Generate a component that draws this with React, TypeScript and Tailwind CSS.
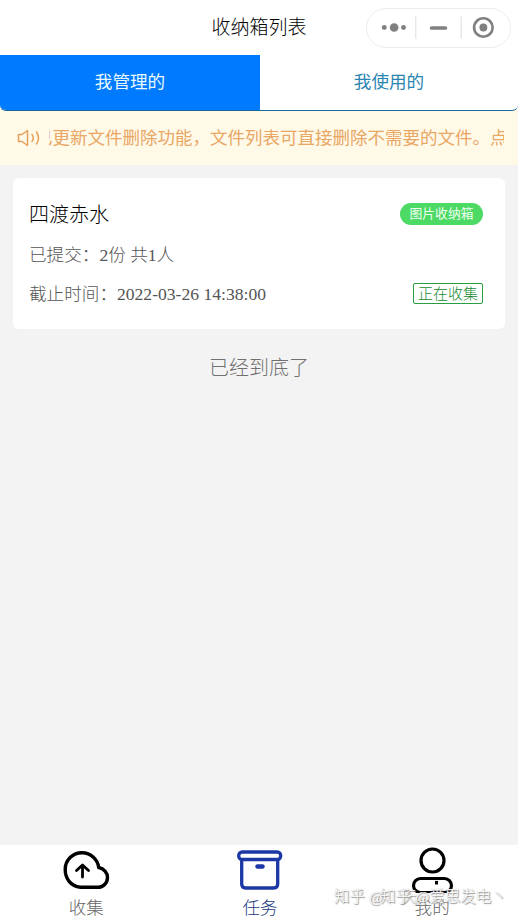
function Capsule() {
  return (
    <div className="flex h-10 w-[145px] items-center rounded-full border border-[#ededed] bg-white">
      <svg viewBox="0 0 145 40" className="h-10 w-full" fill="#808080">
        <circle cx="17.5" cy="19.5" r="2.5" />
        <circle cx="27.5" cy="19.5" r="4.4" />
        <circle cx="37" cy="19.5" r="2.5" />
        <path d="M49.5 8v23M95.5 8v23" stroke="#dcdcdc" />
        <path d="M65.500 20h14" stroke="#808080" strokeWidth="3.8" strokeLinecap="round" />
        <circle cx="118" cy="19.5" r="9.4" fill="none" stroke="#808080" strokeWidth="2.7" />
        <circle cx="118" cy="19.5" r="4" />
      </svg>
    </div>
  );
}

function SpeakerIcon() {
  return (
    <svg viewBox="0 0 24 20" className="h-5 w-6 shrink-0" fill="none" stroke="#e5a15b" strokeWidth="1.5" strokeLinejoin="round" strokeLinecap="round">
      <path d="M1.5 6.5H5L10.500 2.500v15L5 13.5H1.5z" />
      <path d="M15 6.5q2.6 3.500 0 7M19.500 4q4 6 0 12" />
    </svg>
  );
}

function CloudIcon() {
  return (
    <svg viewBox="0 0 48 40" className="h-10 w-12" fill="none" stroke="#000" strokeWidth="3.4" strokeLinecap="round" strokeLinejoin="round">
      <path d="M18.500 37.300C8 36 3.200 28 3.200 19.500C3.200 10 10.800 2.800 20 2.800C29 2.800 35.800 9.500 36.700 17.500C42 18.500 45.500 23 45.500 27.500C45.500 33 41 37.300 36 37.300Z" />
      <path d="M20.500 27V15.500M14.500 20.500L20.500 15L26.500 20.500" strokeWidth="2.800" />
    </svg>
  );
}

function BoxIcon() {
  return (
    <svg viewBox="0 0 48 40" className="h-10 w-12" fill="none" stroke="#1b38a4" strokeWidth="3.300" strokeLinejoin="round">
      <rect x="2.700" y="2" width="42" height="7.500" rx="3.500" />
      <path d="M5.700 9.500V34q0 4 4 4H37.700q4 0 4-4V9.500" />
      <path d="M21.500 16.500h5" strokeWidth="4.500" strokeLinecap="round" />
    </svg>
  );
}

function UserIcon() {
  return (
    <svg viewBox="0 0 48 48" className="h-12 w-12" fill="none" stroke="#000" strokeWidth="3.200" strokeLinecap="round">
      <circle cx="24.500" cy="15.500" r="11.500" />
      <rect x="5.500" y="33.500" width="38" height="14" rx="7" />
      <path d="M27 37.700h3" strokeWidth="3.600" strokeLinecap="butt" />
    </svg>
  );
}

export default function App() {
  return (
    <div className="relative flex h-[920px] w-[518px] flex-col overflow-hidden bg-[#f3f3f3] font-['Liberation_Serif','Noto_Sans_CJK_SC',sans-serif] font-light whitespace-nowrap">
      <header className="grid h-[55px] grid-cols-[1fr_auto_1fr] items-center bg-white">
        <span />
        <h1 className="text-[19px] leading-[55px] text-black">收纳箱列表</h1>
        <div className="flex justify-end pr-[7px]"><Capsule /></div>
      </header>

      <div className="bg-[#fff9e8]">
        <nav className="flex h-14 overflow-hidden rounded-b-md border-b border-[#176b9c] bg-white text-[17.600px] leading-[52px]">
          <button className="w-[260px] bg-[#007aff] pb-0.5 font-normal text-[#e8f8ff]">我管理的</button>
          <button className="flex-1 rounded-br-md pb-0.5 font-normal text-[#2a86b0]">我使用的</button>
        </nav>
        <div className="flex h-[54px] items-center pr-[14px] pl-[17px] text-[17.500px] font-normal text-[#e8a765]">
          <SpeakerIcon />
          <div className="ml-[8px] flex flex-1 justify-start overflow-hidden">
            <span className="-ml-[14px]">已更新文件删除功能，文件列表可直接删除不需要的文件。点击</span>
          </div>
        </div>
      </div>

      <main className="flex-1 pt-[13px] pr-[13px] pl-[13px]">
        <section className="flex h-[151px] flex-col rounded-md bg-white pt-4 pr-[22px] pl-4 text-[17.600px] text-[#555]">
          <div className="flex h-10 items-center justify-between">
            <h2 className="pt-0.5 text-[20px] text-black">四渡赤水</h2>
            <span className="h-[22px] w-[83px] rounded-full bg-[#4cd964] text-center text-[12.800px] leading-[22px] font-normal text-[#edfff0]">图片收纳箱</span>
          </div>
          <p className="h-10 pt-px leading-10">已提交：2份 共1人</p>
          <div className="flex h-[39px] items-center justify-between">
            <p className="pt-0.5">截止时间：2022-03-26 14:38:00</p>
            <span className="h-[21px] w-[70px] rounded-xs border border-[#299e42] text-center text-[15px] leading-[20px] text-[#168a30]">正在收集</span>
          </div>
        </section>
        <p className="mt-[23px] text-center text-[20px] leading-8 text-[#707070]">已经到底了</p>
      </main>

      <footer className="grid h-[75px] grid-cols-3 bg-white text-[17.600px] text-[#666]">
        <div className="flex flex-col items-center pt-[5px]"><CloudIcon /><span className="mt-[6px] leading-6">收集</span></div>
        <div className="flex flex-col items-center pt-[5px] pl-0.5 text-[#1b3a80]"><BoxIcon /><span className="mt-[6px] leading-6">任务</span></div>
        <div className="flex flex-col items-center pl-px"><UserIcon /><span className="mt-[3px] leading-6">我的</span></div>
      </footer>
      <div className="absolute top-[887px] left-[334px] text-[15.500px] leading-5 text-white [text-shadow:1px_1px_1px_#888,0_0_1px_#aaa]">知乎 @<span className="pl-[18px]">天</span></div>
      <div className="absolute top-[887px] left-[380px] text-[15.500px] leading-5 text-white [text-shadow:1px_1px_1px_#888,0_0_1px_#aaa]">知乎 @爱思发电丶</div>
    </div>
  );
}
